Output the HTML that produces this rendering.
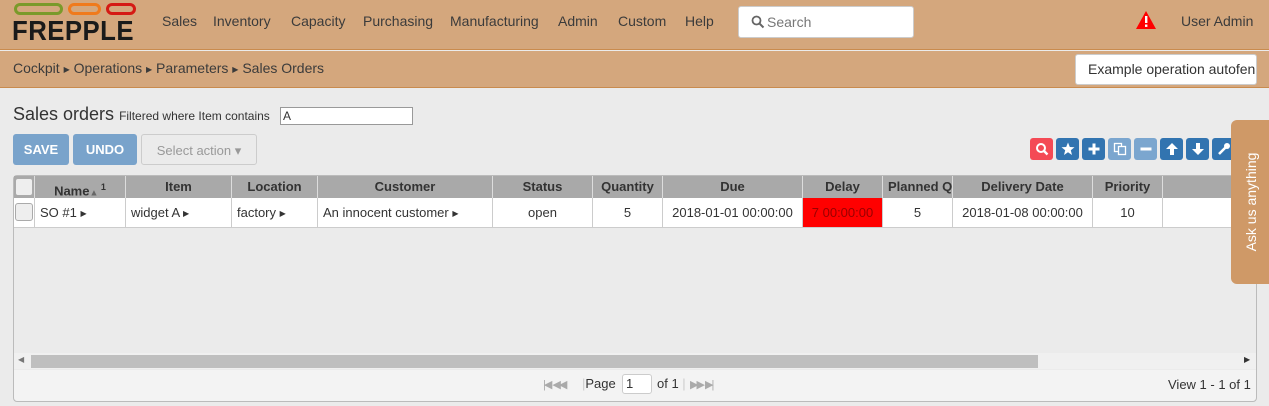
<!DOCTYPE html>
<html><head><style>
*{margin:0;padding:0;box-sizing:border-box}
body{width:1269px;height:406px;background:#ebebeb;font-family:"Liberation Sans",sans-serif;font-size:14px;color:#333;position:relative;overflow:hidden}
.a{position:absolute}
#hdr{left:0;top:0;width:1269px;height:50px;background:#d4a77d;border-bottom:1px solid #c98b4e}
#bc{left:0;top:51px;width:1269px;height:37px;background:#d4a77d;border-bottom:1px solid #c98b4e}
.nav{top:13px;font-size:14px;color:#3b3b3b}
.btn{height:31px;border-radius:3px;color:#fff;font-size:13px;font-weight:bold;text-align:center;line-height:31px}
.ib{top:138px;width:23px;height:22px;border-radius:3px;background:#3274b0}
.ib svg{display:block;margin:4px auto 0}
.th{top:176px;height:22px;background:#a9a9a9;border-right:1px solid #ddd;font-weight:bold;font-size:13px;text-align:center;line-height:22px;color:#333;white-space:nowrap}
.td{top:198px;height:30px;background:#fff;border-right:1px solid #ccc;border-bottom:1px solid #ccc;font-size:13px;line-height:29px;padding-left:5px}
.c{text-align:center;padding-left:0}
.cb{width:18px;height:18px;border:1px solid #aaa;border-radius:3px;background:#eee}
.tri{font-size:8px;vertical-align:1px}
.pg{font-size:11px;color:#aaa;letter-spacing:-2px}
</style></head><body>
<div id="hdr" class="a"></div>
<div id="bc" class="a"></div>
<div class="a" style="left:14px;top:3px;width:49px;height:12px;border:3px solid #7a9a2a;border-radius:7px"></div>
<div class="a" style="left:68px;top:3px;width:33px;height:12px;border:3px solid #f07a1c;border-radius:7px"></div>
<div class="a" style="left:106px;top:3px;width:30px;height:12px;border:3px solid #d51a14;border-radius:7px"></div>
<div class="a" style="left:12px;top:17px;font-size:28px;font-weight:bold;color:#1a1a1a;letter-spacing:0.5px;line-height:28px;transform:scaleX(0.92);transform-origin:left top">FREPPLE</div>
<div class="a nav" style="left:162px">Sales</div>
<div class="a nav" style="left:213px">Inventory</div>
<div class="a nav" style="left:291px">Capacity</div>
<div class="a nav" style="left:363px">Purchasing</div>
<div class="a nav" style="left:450px">Manufacturing</div>
<div class="a nav" style="left:558px">Admin</div>
<div class="a nav" style="left:618px">Custom</div>
<div class="a nav" style="left:685px">Help</div>
<div class="a" style="left:738px;top:6px;width:176px;height:32px;background:#fff;border:1px solid #ccc;border-radius:3px;font-size:14px;color:#777;line-height:30px;padding-left:28px">Search</div>
<svg class="a" style="left:751px;top:15px" width="14" height="14"><circle cx="5.5" cy="5.5" r="4" stroke="#666" stroke-width="1.8" fill="none"/><line x1="8.5" y1="8.5" x2="12.5" y2="12.5" stroke="#666" stroke-width="2"/></svg>
<svg class="a" style="left:1136px;top:11px" width="20" height="18"><polygon points="10,0 20,18 0,18" fill="#f00"/><rect x="9" y="5" width="2.4" height="7" fill="#fff"/><rect x="9" y="13.5" width="2.4" height="2.4" fill="#fff"/></svg>
<div class="a nav" style="left:1181px">User Admin</div>
<div class="a" style="left:13px;top:60px;font-size:14px;color:#3b3b3b">Cockpit <span class="tri">▶</span> Operations <span class="tri">▶</span> Parameters <span class="tri">▶</span> Sales Orders</div>
<div class="a" style="left:1075px;top:54px;width:182px;height:31px;background:#fff;border:1px solid #ccc;border-radius:3px;font-size:14px;line-height:29px;padding-left:12px;overflow:hidden;white-space:nowrap">Example operation autofence</div>
<div class="a" style="left:13px;top:104px;font-size:18px;color:#333">Sales orders <span style="font-size:12px">Filtered where Item contains</span></div>
<div class="a" style="left:280px;top:107px;width:133px;height:18px;background:#fff;border:1px solid #999;font-size:12px;padding-left:2px;line-height:16px">A</div>
<div class="a btn" style="left:13px;top:134px;width:56px;background:#79a3cb">SAVE</div>
<div class="a btn" style="left:73px;top:134px;width:64px;background:#79a3cb">UNDO</div>
<div class="a btn" style="left:141px;top:134px;width:116px;background:#ebebeb;border:1px solid #ccc;color:#999;font-weight:normal">Select action ▾</div>
<div class="a ib" style="left:1030px;background:#f44a55"><svg width="14" height="14"><circle cx="6" cy="6" r="4" stroke="#fff" stroke-width="2" fill="none"/><line x1="9" y1="9" x2="12.5" y2="12.5" stroke="#fff" stroke-width="2.4"/></svg></div>
<div class="a ib" style="left:1056px"><svg width="14" height="14"><polygon points="7,0.5 8.8,5 13.5,5.2 9.8,8.2 11,13 7,10.3 3,13 4.2,8.2 0.5,5.2 5.2,5" fill="#fff"/></svg></div>
<div class="a ib" style="left:1082px"><svg width="14" height="14"><rect x="5.5" y="1.5" width="3" height="11" fill="#fff"/><rect x="1.5" y="5.5" width="11" height="3" fill="#fff"/></svg></div>
<div class="a ib" style="left:1108px;background:#7ba6cf"><svg width="14" height="14"><rect x="1.5" y="1.5" width="7" height="8" fill="none" stroke="#fff" stroke-width="1.3"/><rect x="5.5" y="4.5" width="7" height="8" fill="#7ba6cf" stroke="#fff" stroke-width="1.3"/></svg></div>
<div class="a ib" style="left:1134px;background:#7ba6cf"><svg width="14" height="14"><rect x="1.5" y="5.5" width="11" height="3" fill="#fff"/></svg></div>
<div class="a ib" style="left:1160px"><svg width="14" height="14"><polygon points="7,1 13,7 9,7 9,13 5,13 5,7 1,7" fill="#fff"/></svg></div>
<div class="a ib" style="left:1186px"><svg width="14" height="14"><polygon points="7,13 13,7 9,7 9,1 5,1 5,7 1,7" fill="#fff"/></svg></div>
<div class="a ib" style="left:1212px"><svg width="14" height="14"><line x1="2" y1="12" x2="9" y2="5" stroke="#fff" stroke-width="2.6"/><circle cx="10" cy="4" r="3" fill="#fff"/></svg></div>
<div class="a" style="left:13px;top:175px;width:1244px;height:227px;background:#ebebeb;border:1px solid #bbb;border-radius:4px"></div>
<div class="a th" style="left:14px;width:21px"><div class="cb" style="margin:2px 1px"></div></div>
<div class="a th" style="left:35px;width:91px">Name<span style="font-size:9px;color:#666">▲</span><sup style="font-size:9px"> 1</sup></div>
<div class="a th" style="left:126px;width:106px">Item</div>
<div class="a th" style="left:232px;width:86px">Location</div>
<div class="a th" style="left:318px;width:175px">Customer</div>
<div class="a th" style="left:493px;width:100px">Status</div>
<div class="a th" style="left:593px;width:70px">Quantity</div>
<div class="a th" style="left:663px;width:140px">Due</div>
<div class="a th" style="left:803px;width:80px">Delay</div>
<div class="a th" style="left:883px;width:70px;overflow:hidden;text-align:left;padding-left:5px">Planned Quantity</div>
<div class="a th" style="left:953px;width:140px">Delivery Date</div>
<div class="a th" style="left:1093px;width:70px">Priority</div>
<div class="a th" style="left:1163px;width:93px"></div>
<div class="a td" style="left:14px;width:21px;padding-left:1px;padding-top:5px"><div class="cb"></div></div>
<div class="a td" style="left:35px;width:91px">SO #1 <span class="tri">▶</span></div>
<div class="a td" style="left:126px;width:106px">widget A <span class="tri">▶</span></div>
<div class="a td" style="left:232px;width:86px">factory <span class="tri">▶</span></div>
<div class="a td" style="left:318px;width:175px">An innocent customer <span class="tri">▶</span></div>
<div class="a td c" style="left:493px;width:100px">open</div>
<div class="a td c" style="left:593px;width:70px">5</div>
<div class="a td c" style="left:663px;width:140px">2018-01-01 00:00:00</div>
<div class="a td c" style="left:803px;width:80px;background:#f00;color:#900">7 00:00:00</div>
<div class="a td c" style="left:883px;width:70px">5</div>
<div class="a td c" style="left:953px;width:140px">2018-01-08 00:00:00</div>
<div class="a td c" style="left:1093px;width:70px">10</div>
<div class="a td" style="left:1163px;width:93px"></div>
<div class="a" style="left:14px;top:353px;width:1242px;height:16px;background:#f0f0f0"></div>
<div class="a" style="left:31px;top:355px;width:1007px;height:13px;background:#bfbfbf"></div>
<div class="a" style="left:18px;top:355px;font-size:8px;color:#777">◀</div>
<div class="a" style="left:1244px;top:355px;font-size:8px;color:#333">▶</div>
<div class="a" style="left:14px;top:370px;width:1242px;height:31px;background:#f3f3f3;border-radius:0 0 4px 4px"></div>
<div class="a pg" style="left:543px;top:378px">|◀ &nbsp;◀◀</div>
<div class="a" style="left:582px;top:376px;font-size:13px;color:#333"><span style="color:#ccc">|</span>Page</div>
<div class="a" style="left:622px;top:374px;width:30px;height:20px;background:#fff;border:1px solid #ccc;border-radius:3px;font-size:13px;padding-left:3px;line-height:18px">1</div>
<div class="a" style="left:657px;top:376px;font-size:13px;color:#333">of 1 <span style="color:#ccc">|</span></div>
<div class="a pg" style="left:690px;top:378px">▶▶ &nbsp;▶|</div>
<div class="a" style="left:1168px;top:377px;font-size:13px;color:#333">View 1 - 1 of 1</div>
<div class="a" style="left:1231px;top:120px;width:40px;height:164px;background:#cf9967;border-radius:6px 0 0 6px"></div>
<div class="a" style="left:1251px;top:202px;transform:translate(-50%,-50%) rotate(-90deg);color:#fff;font-size:14px;white-space:nowrap">Ask us anything</div>
</body></html>
